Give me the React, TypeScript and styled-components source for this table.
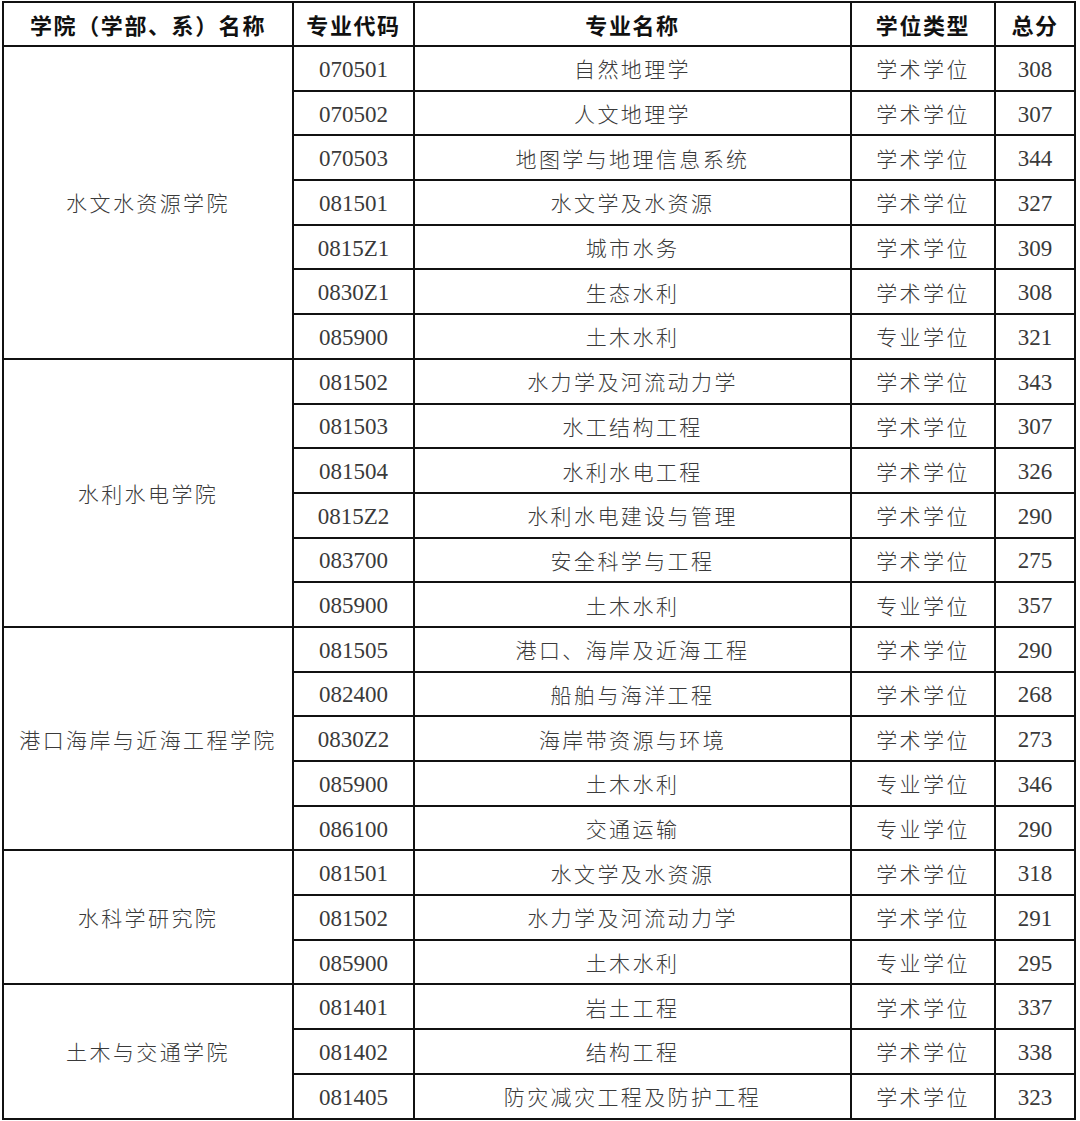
import React from 'react';
import styled, { createGlobalStyle } from 'styled-components';

interface Major {
  code: string;
  name: string;
  degree: string;
  score: number;
}

interface College {
  name: string;
  majors: Major[];
}

const ACADEMIC = '学术学位';
const PROFESSIONAL = '专业学位';

const colleges: College[] = [
  {
    name: '水文水资源学院',
    majors: [
      { code: '070501', name: '自然地理学', degree: ACADEMIC, score: 308 },
      { code: '070502', name: '人文地理学', degree: ACADEMIC, score: 307 },
      { code: '070503', name: '地图学与地理信息系统', degree: ACADEMIC, score: 344 },
      { code: '081501', name: '水文学及水资源', degree: ACADEMIC, score: 327 },
      { code: '0815Z1', name: '城市水务', degree: ACADEMIC, score: 309 },
      { code: '0830Z1', name: '生态水利', degree: ACADEMIC, score: 308 },
      { code: '085900', name: '土木水利', degree: PROFESSIONAL, score: 321 },
    ],
  },
  {
    name: '水利水电学院',
    majors: [
      { code: '081502', name: '水力学及河流动力学', degree: ACADEMIC, score: 343 },
      { code: '081503', name: '水工结构工程', degree: ACADEMIC, score: 307 },
      { code: '081504', name: '水利水电工程', degree: ACADEMIC, score: 326 },
      { code: '0815Z2', name: '水利水电建设与管理', degree: ACADEMIC, score: 290 },
      { code: '083700', name: '安全科学与工程', degree: ACADEMIC, score: 275 },
      { code: '085900', name: '土木水利', degree: PROFESSIONAL, score: 357 },
    ],
  },
  {
    name: '港口海岸与近海工程学院',
    majors: [
      { code: '081505', name: '港口、海岸及近海工程', degree: ACADEMIC, score: 290 },
      { code: '082400', name: '船舶与海洋工程', degree: ACADEMIC, score: 268 },
      { code: '0830Z2', name: '海岸带资源与环境', degree: ACADEMIC, score: 273 },
      { code: '085900', name: '土木水利', degree: PROFESSIONAL, score: 346 },
      { code: '086100', name: '交通运输', degree: PROFESSIONAL, score: 290 },
    ],
  },
  {
    name: '水科学研究院',
    majors: [
      { code: '081501', name: '水文学及水资源', degree: ACADEMIC, score: 318 },
      { code: '081502', name: '水力学及河流动力学', degree: ACADEMIC, score: 291 },
      { code: '085900', name: '土木水利', degree: PROFESSIONAL, score: 295 },
    ],
  },
  {
    name: '土木与交通学院',
    majors: [
      { code: '081401', name: '岩土工程', degree: ACADEMIC, score: 337 },
      { code: '081402', name: '结构工程', degree: ACADEMIC, score: 338 },
      { code: '081405', name: '防灾减灾工程及防护工程', degree: ACADEMIC, score: 323 },
    ],
  },
];

const GlobalStyle = createGlobalStyle`
  html, body {
    margin: 0;
    padding: 0;
    background: #ffffff;
  }
`;

const Page = styled.div`
  padding: 1px 0 0 2px;
  font-family: 'Liberation Serif', 'Noto Sans CJK SC', serif;
`;

const Table = styled.table`
  border-collapse: collapse;
  table-layout: fixed;
  width: 1073px;
  border: 2px solid #111;
`;

const HeadCell = styled.th<{ $width: number }>`
  width: ${(p) => p.$width}px;
  height: 42px;
  padding: 0;
  border: 2px solid #111;
  font-family: 'Noto Sans CJK SC', sans-serif;
  font-weight: 700;
  font-size: 22px;
  letter-spacing: 1.6px;
  color: #111;
  text-align: center;
  vertical-align: middle;
`;

// numeric cells are nudged down a little so the digits sit where the
// reference puts them; the padding is taken back out of the height
const Cell = styled.td<{ $num?: boolean }>`
  box-sizing: border-box;
  height: 44.7px;
  padding: ${(p) => (p.$num ? '3px 0 0' : '0')};
  border: 2px solid #111;
  text-align: center;
  vertical-align: middle;
  color: #3a3a3a;
  font-family: ${(p) =>
    p.$num ? "'Liberation Serif', serif" : "'Noto Sans CJK SC', sans-serif"};
  font-size: ${(p) => (p.$num ? '23px' : '21px')};
  font-weight: ${(p) => (p.$num ? 400 : 300)};
  letter-spacing: ${(p) => (p.$num ? '0' : '2.4px')};
`;

const CollegeCell = styled(Cell)`
  letter-spacing: 2.4px;
`;

// widths exclude the collapsed borders
const columns = [
  { label: '学院（学部、系）名称', width: 288 },
  { label: '专业代码', width: 119 },
  { label: '专业名称', width: 435 },
  { label: '学位类型', width: 142 },
  { label: '总分', width: 78 },
];

const App: React.FC = () => {
  return (
    <Page>
      <GlobalStyle />
      <Table>
        <thead>
          <tr>
            {columns.map((c) => (
              <HeadCell key={c.label} $width={c.width}>
                {c.label}
              </HeadCell>
            ))}
          </tr>
        </thead>
        <tbody>
          {colleges.map((college) =>
            college.majors.map((m, i) => (
              <tr key={college.name + m.code}>
                {i === 0 && (
                  <CollegeCell rowSpan={college.majors.length}>{college.name}</CollegeCell>
                )}
                <Cell $num>{m.code}</Cell>
                <Cell>{m.name}</Cell>
                <Cell>{m.degree}</Cell>
                <Cell $num>{m.score}</Cell>
              </tr>
            ))
          )}
        </tbody>
      </Table>
    </Page>
  );
};

export default App;
